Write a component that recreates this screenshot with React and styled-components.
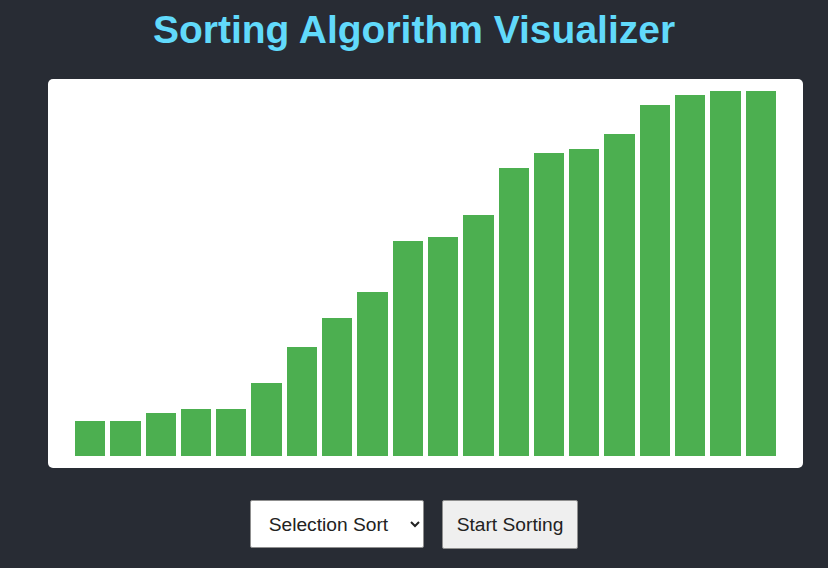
import React, { useState } from "react";
import styled, { createGlobalStyle } from "styled-components";

const GlobalStyle = createGlobalStyle`
  html, body {
    margin: 0;
    padding: 0;
    background: #282c34;
    font-family: "Liberation Sans", Arial, sans-serif;
  }
`;

const StyledWrapper = styled.div`
  min-height: 568px;
  padding-top: 7px;
  box-sizing: border-box;
`;

const Title = styled.h1`
  margin: 0 0 27px;
  text-align: center;
  font-size: 39px;
  line-height: 45px;
  font-weight: bold;
  color: #61dafb;
`;

const Chart = styled.div`
  margin: 0 25px 0 48px;
  height: 389px;
  box-sizing: border-box;
  padding: 0 24.5px 12px;
  background: #ffffff;
  border-radius: 5px;
  display: flex;
  align-items: flex-end;
`;

const Bar = styled.div`
  flex: 1;
  margin: 0 2.5px;
  background: ${({ active }) => (active ? "#f44336" : "#4caf50")};
`;

const Controls = styled.div`
  display: flex;
  justify-content: center;
  align-items: flex-start;
  gap: 18px;
  margin-top: 32px;
`;

const Select = styled.select`
  width: 174px;
  height: 48px;
  box-sizing: border-box;
  padding: 0 10px 0 14px;
  font-family: "Liberation Sans", Arial, sans-serif;
  font-size: 19.2px;
  color: #222;
  background: #ffffff;
  border: 1px solid #8f8f8f;
  border-radius: 2px;
`;

const Button = styled.button`
  height: 49px;
  box-sizing: border-box;
  padding: 0 14px;
  font-family: "Liberation Sans", Arial, sans-serif;
  font-size: 19.2px;
  color: #222;
  background: #efefef;
  border: 1px solid #8f8f8f;
  border-radius: 2px;
  cursor: pointer;
`;

const heights = [
  35, 35, 43, 47, 47, 73, 109, 138, 164, 215, 219, 241, 288, 303, 307, 322,
  351, 361, 365, 365,
];

export default function App() {
  const [algorithm, setAlgorithm] = useState("selection");
  return (
    <>
      <GlobalStyle />
      <StyledWrapper>
        <Title>Sorting Algorithm Visualizer</Title>
        <Chart>
          {heights.map((h, i) => (
            <Bar key={i} style={{ height: `${h}px` }} />
          ))}
        </Chart>
        <Controls>
          <Select value={algorithm} onChange={(e) => setAlgorithm(e.target.value)}>
            <option value="bubble">Bubble Sort</option>
            <option value="selection">Selection Sort</option>
            <option value="insertion">Insertion Sort</option>
          </Select>
          <Button>Start Sorting</Button>
        </Controls>
      </StyledWrapper>
    </>
  );
}
